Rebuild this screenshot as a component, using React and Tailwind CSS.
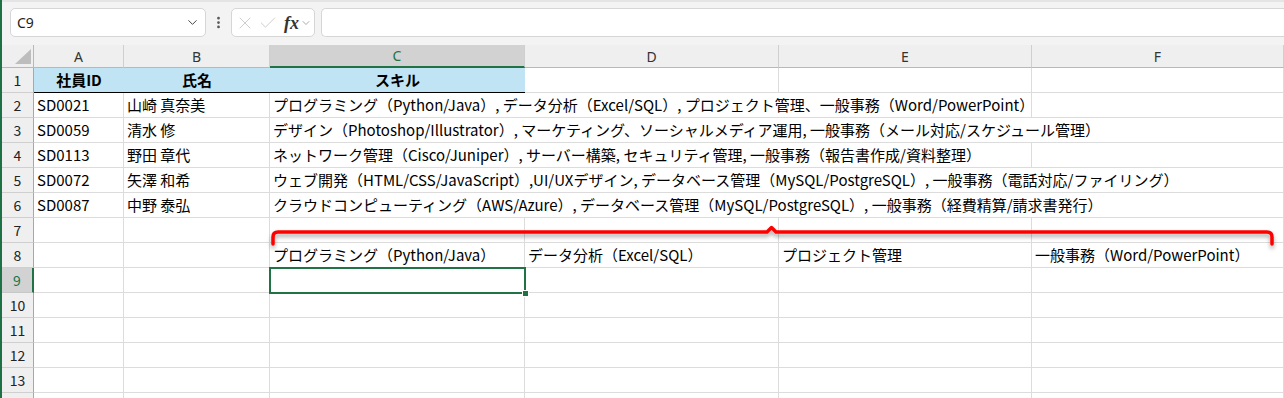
import React from "react";
import { ChevronDown, EllipsisVertical, X, Check } from "lucide-react";

const COLS = "grid grid-cols-[32px_90px_146px_255px_254px_253px_252px]";
const FONT = { fontFamily: '"Noto Sans CJK JP", "Noto Sans", sans-serif' };

function RowHead({ n, active }) {
  return (
    <div
      className={
        active
          ? "flex items-center justify-center bg-[#d2d2d2] border-r-2 border-b border-r-[#217346] border-b-[#c8c8c8] text-[14px] text-[#217346]"
          : "flex items-center justify-center bg-[#efefef] border-r border-b border-r-[#a8a8a8] border-b-[#cfcfcf] text-[14px] text-[#222]"
      }
    >
      {n}
    </div>
  );
}

function Cell({ children, className = "" }) {
  return (
    <div
      className={
        "flex items-center px-[3px] whitespace-nowrap overflow-visible text-[15px] text-black border-r border-b border-[#dcdcdc] " +
        className
      }
    >
      {children}
    </div>
  );
}

const data = [
  ["SD0021", "山崎 真奈美", "プログラミング（Python/Java）, データ分析（Excel/SQL）, プロジェクト管理、一般事務（Word/PowerPoint）", 3],
  ["SD0059", "清水 修", "デザイン（Photoshop/Illustrator）, マーケティング、ソーシャルメディア運用, 一般事務（メール対応/スケジュール管理）", 4],
  ["SD0113", "野田 章代", "ネットワーク管理（Cisco/Juniper）, サーバー構築, セキュリティ管理, 一般事務（報告書作成/資料整理）", 3],
  ["SD0072", "矢澤 和希", "ウェブ開発（HTML/CSS/JavaScript）,UI/UXデザイン, データベース管理（MySQL/PostgreSQL）, 一般事務（電話対応/ファイリング）", 4],
  ["SD0087", "中野 泰弘", "クラウドコンピューティング（AWS/Azure）, データベース管理（MySQL/PostgreSQL）, 一般事務（経費精算/請求書発行）", 4],
];

export default function App() {
  return (
    <div className="relative w-[1284px] h-[398px] overflow-hidden bg-white border-l-2 border-[#1e7145]" style={FONT}>
      {/* Top formula bar */}
      <div className="h-[45px] bg-[#f3f3f3] border-t-2 border-[#e4e4e4] flex items-start pt-[6px] pl-[8px] gap-[3px]">
        <div className="w-[196px] h-[29px] bg-white border border-[#d6d6d6] rounded-[5px] flex items-center justify-between pl-[6px] pr-[5px]">
          <span className="text-[14px] text-[#222]" style={{ fontFamily: '"Noto Sans", sans-serif' }}>C9</span>
          <ChevronDown size={15} strokeWidth={1.6} className="text-[#444]" />
        </div>
        <div className="w-[19px] h-[29px] flex items-center justify-center">
          <EllipsisVertical size={15} strokeWidth={2.4} className="text-[#555]" />
        </div>
        <div className="w-[84px] h-[29px] bg-white border border-[#d6d6d6] rounded-[5px] flex items-center pl-[3px] gap-[3px]">
          <X size={20} strokeWidth={1} className="text-[#c4c4c4]" />
          <Check size={20} strokeWidth={1} className="text-[#c4c4c4]" />
          <span className="text-[18px] italic font-bold text-[#333] leading-none ml-[3px]" style={{ fontFamily: '"Liberation Serif", serif' }}>fx</span>
          <ChevronDown size={12} strokeWidth={1.4} className="text-[#888] -ml-[2px]" />
        </div>
        <div className="flex-1 h-[29px] bg-white border border-[#d6d6d6] rounded-l-[5px] border-r-0 ml-[3px]" />
      </div>

      {/* Column header */}
      <div className={COLS + " h-[23px] bg-[#efefef] text-[14px]"} style={{ fontFamily: '"Noto Sans", sans-serif' }}>
        <div className="relative border-r border-b border-[#b8b8b8]">
          <svg className="absolute left-0 top-0" width="32" height="23" viewBox="0 0 32 23">
            <polygon points="29,4 29,19 13,19" fill="#bdbdbd" />
          </svg>
        </div>
        <div className="flex items-center justify-center border-r border-b border-r-[#cfcfcf] border-b-[#b8b8b8] text-[#333]">A</div>
        <div className="flex items-center justify-center border-r border-b border-r-[#cfcfcf] border-b-[#b8b8b8] text-[#333]">B</div>
        <div className="flex items-center justify-center bg-[#d2d2d2] border-r border-b-2 border-r-[#cfcfcf] border-b-[#217346] text-[#217346]">C</div>
        <div className="flex items-center justify-center border-r border-b border-r-[#cfcfcf] border-b-[#b8b8b8] text-[#333]">D</div>
        <div className="flex items-center justify-center border-r border-b border-r-[#cfcfcf] border-b-[#b8b8b8] text-[#333]">E</div>
        <div className="flex items-center justify-center border-r border-b border-r-[#cfcfcf] border-b-[#b8b8b8] text-[#333]">F</div>
      </div>

      {/* Row 1 */}
      <div className={COLS + " h-[25px]"}>
        <RowHead n={1} />
        <div className="flex items-center justify-center bg-[#c1e4f5] border-b border-black text-[15px] font-bold">社員ID</div>
        <div className="flex items-center justify-center bg-[#c1e4f5] border-b border-black text-[15px] font-bold">氏名</div>
        <div className="flex items-center justify-center bg-[#c1e4f5] border-b border-black text-[15px] font-bold">スキル</div>
        <Cell />
        <Cell />
        <Cell />
      </div>

      {/* Rows 2-6 */}
      {data.map(([id, name, skills, span], i) => (
        <div key={id} className={COLS + " h-[25px]"}>
          <RowHead n={i + 2} />
          <Cell>{id}</Cell>
          <Cell>{name}</Cell>
          {span === 3 ? (
            <>
              <Cell className="col-span-3">{skills}</Cell>
              <Cell />
            </>
          ) : (
            <Cell className="col-span-4">{skills}</Cell>
          )}
        </div>
      ))}

      {/* Row 7 */}
      <div className={COLS + " h-[25px]"}>
        <RowHead n={7} />
        <Cell /><Cell /><Cell /><Cell /><Cell /><Cell />
      </div>

      {/* Row 8 */}
      <div className={COLS + " h-[25px]"}>
        <RowHead n={8} />
        <Cell />
        <Cell />
        <Cell>プログラミング（Python/Java）</Cell>
        <Cell>データ分析（Excel/SQL）</Cell>
        <Cell>プロジェクト管理</Cell>
        <Cell>一般事務（Word/PowerPoint）</Cell>
      </div>

      {/* Rows 9-14 */}
      {[9, 10, 11, 12, 13, 14].map((n) => (
        <div key={n} className={COLS + " h-[25px]"}>
          <RowHead n={n === 14 ? "" : n} active={n === 9} />
          <Cell /><Cell /><Cell /><Cell /><Cell /><Cell />
        </div>
      ))}

      {/* Selected cell C9 */}
      <div className="absolute left-[267px] top-[267px] w-[257px] h-[27px] border-2 border-[#217346] pointer-events-none" />
      <div className="absolute left-[520px] top-[290px] w-[7px] h-[7px] bg-[#217346] border border-white pointer-events-none" />

      {/* Red bracket annotation */}
      <svg className="absolute left-0 top-0 pointer-events-none" width="1282" height="398" viewBox="0 0 1282 398">
        <defs>
          <filter id="sh" x="-5%" y="-50%" width="110%" height="300%">
            <feDropShadow dx="0" dy="3" stdDeviation="2.2" floodColor="#000" floodOpacity="0.35" />
          </filter>
        </defs>
        <path
          d="M 271 244 L 271 237 Q 271 232 276 232 L 765 232 L 769.5 227.5 L 774 232 L 1265 232 Q 1270 232 1270 237 L 1270 244"
          fill="none"
          stroke="#ff0000"
          strokeWidth="3.5"
          strokeLinecap="round"
          strokeLinejoin="round"
          filter="url(#sh)"
        />
      </svg>
    </div>
  );
}
